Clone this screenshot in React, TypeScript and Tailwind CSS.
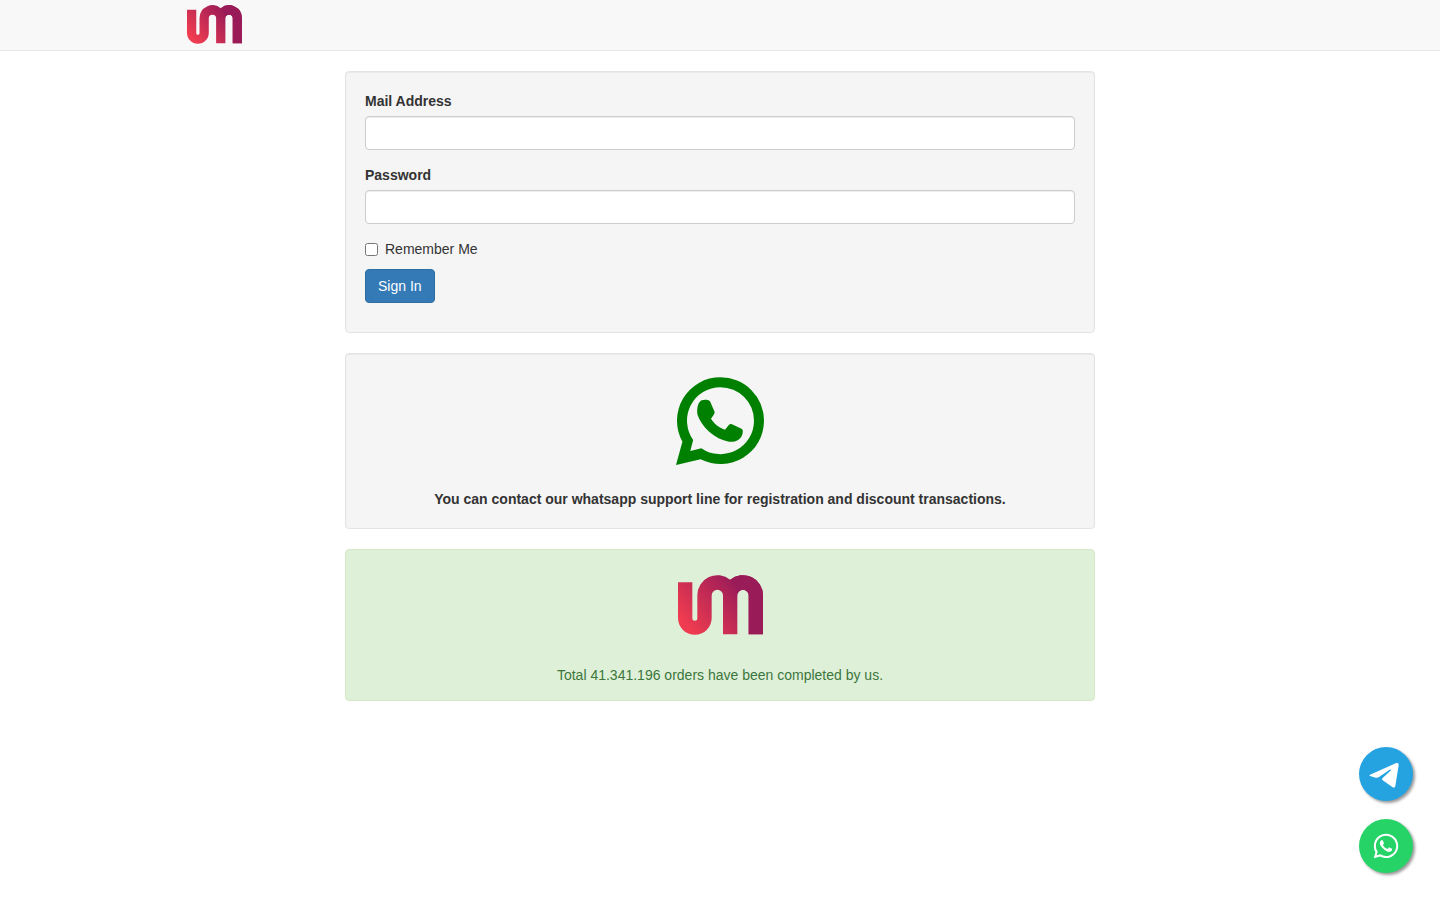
import { type ReactNode, useId } from 'react';
import { FaWhatsapp } from 'react-icons/fa';

const Logo = ({ className }: { className: string }) => {
  const gradientId = useId();

  return (
    <svg viewBox="0 0 255 179" className={className} role="img" aria-label="UM">
      <defs>
        <linearGradient id={gradientId} gradientUnits="userSpaceOnUse" x1="35" y1="165" x2="190" y2="35">
          <stop offset="0" stopColor="#f03c50" />
          <stop offset="1" stopColor="#991b58" />
        </linearGradient>
      </defs>
      <path
        fill={`url(#${gradientId})`}
        d="M0 21H43V129.5A7.5 7.5 0 0 0 58 129.5V60A60 60 0 0 1 156.5 14A60 60 0 0 1 255 60V177H212V61A17 17 0 0 0 178 61V177H135V61A17 17 0 0 0 101 61V128.5A50.5 50.5 0 0 1 0 128.5Z"
      />
      <path
        fill="#991b58"
        d="M156.5 14A60 60 0 0 1 255 60V177H212V61A17 17 0 0 0 178 61C178 42 170 26 156.5 14Z"
      />
    </svg>
  );
};

const SupportIcon = () => (
  <svg viewBox="33 21 264 264" className="size-[88px]" fill="#008000" aria-hidden="true">
    <path
      fillRule="evenodd"
      d="M33 285L52.2 215A130.5 130.5 0 0 1 166.5 21.5A130.5 130.5 0 0 1 297 152A130.5 130.5 0 0 1 107 268ZM76 243L109 234.4A100.5 100.5 0 0 0 267 152A100.5 100.5 0 0 0 166.5 51.5A100.5 100.5 0 0 0 84.5 210Z"
    />
    <path d="M110 91C118 88 128 89 133 92Q136 94 137 98L149 126Q150 131 138 146C147 160 160 172 180 179L192 164Q196 161 201 163L231 177Q235 180 233 189C230 208 212 218 192 215C150 208 108 170 97 132C95 112 100 96 110 91Z" />
  </svg>
);

const TelegramPlane = () => (
  <svg viewBox="42 36 162 162" className="size-[54px]" fill="#fff" aria-hidden="true">
    <path d="M75 119L154 84Q162 82 161 91L151 153Q149 161 142 156L113 136Q109 132 113 129L138 106Q138 102 134 104L102 126Q98 129 92 128L75 123Q71 121 75 119Z" />
  </svg>
);

const Well = ({ className = '', children }: { className?: string; children: ReactNode }) => (
  <section
    className={`rounded border border-[#e3e3e3] bg-[#f5f5f5] p-[19px] shadow-[inset_0_1px_1px_rgba(0,0,0,0.05)] ${className}`}
  >
    {children}
  </section>
);

interface FieldProps {
  id: string;
  label: string;
  type: string;
}

const Field = ({ id, label, type }: FieldProps) => (
  <div className="mb-[15px]">
    <label htmlFor={id} className="mb-[5px] block font-bold">
      {label}
    </label>
    <input
      id={id}
      name={id}
      type={type}
      className="block h-[34px] w-full rounded border border-[#ccc] bg-white px-3 py-1.5 text-[#555] shadow-[inset_0_1px_1px_rgba(0,0,0,0.075)] outline-none focus:border-[#66afe9]"
    />
  </div>
);

const floatingButton =
  'flex size-[54px] items-center justify-center rounded-full text-white shadow-[2px_2px_3px_#999]';

export default function App() {
  return (
    <div className="min-h-screen bg-white font-['Liberation_Sans',Arial,sans-serif] text-sm leading-5 text-[#333]">
      <nav className="border-b border-[#e7e7e7] bg-[#f8f8f8]">
        <div className="mx-auto flex h-[50px] max-w-[1170px] items-start px-[52px] pt-[5px]">
          <a href="#home">
            <Logo className="h-[39px] w-[55px]" />
          </a>
        </div>
      </nav>

      <main className="mx-auto flex max-w-[780px] flex-col gap-5 px-[15px] py-5">
        <Well>
          <form className="mb-2.5" onSubmit={(event) => event.preventDefault()}>
            <Field id="email" label="Mail Address" type="email" />
            <Field id="password" label="Password" type="password" />
            <div className="mb-2.5 flex">
              <label className="flex items-center gap-[7px]">
                <input type="checkbox" name="remember" className="size-[13px]" />
                Remember Me
              </label>
            </div>
            <button
              type="submit"
              className="block h-[34px] rounded border border-[#2e6da4] bg-[#337ab7] px-3 text-white hover:bg-[#286090]"
            >
              Sign In
            </button>
          </form>
        </Well>

        <Well className="text-center">
          <a href="#whatsapp" className="mt-1 mb-6 flex justify-center" aria-label="WhatsApp support">
            <SupportIcon />
          </a>
          <p className="font-bold">
            You can contact our whatsapp support line for registration and discount transactions.
          </p>
        </Well>

        <section className="rounded border border-[#d6e9c6] bg-[#dff0d8] p-[15px] text-center text-[#3c763d]">
          <div className="mt-2.5 mb-[30px] flex justify-center">
            <Logo className="h-[60px] w-[85px]" />
          </div>
          <p>Total 41.341.196 orders have been completed by us.</p>
        </section>
      </main>

      <div className="fixed right-[27px] bottom-[27px] flex flex-col gap-[18px]">
        <a href="#telegram" aria-label="Telegram" className={`${floatingButton} bg-[#25a3e1]`}>
          <TelegramPlane />
        </a>
        <a href="#whatsapp" aria-label="WhatsApp" className={`${floatingButton} bg-[#25d366]`}>
          <FaWhatsapp size={28} />
        </a>
      </div>
    </div>
  );
}
